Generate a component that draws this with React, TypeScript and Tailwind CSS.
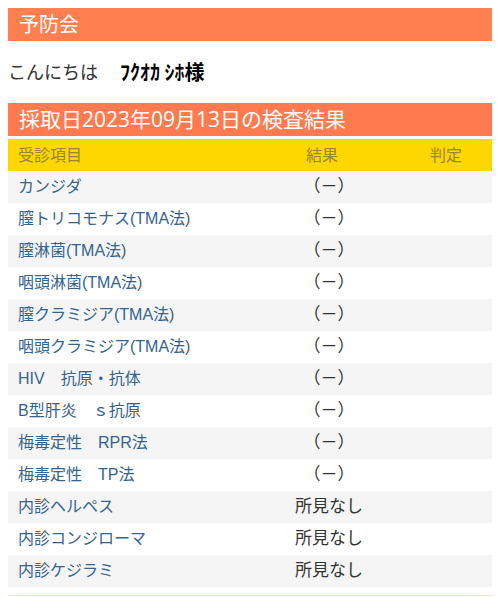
const rows: [string, string][] = [
  ["カンジダ", "（－）"],
  ["膣トリコモナス(TMA法)", "（－）"],
  ["膣淋菌(TMA法)", "（－）"],
  ["咽頭淋菌(TMA法)", "（－）"],
  ["膣クラミジア(TMA法)", "（－）"],
  ["咽頭クラミジア(TMA法)", "（－）"],
  ["HIV　抗原・抗体", "（－）"],
  ["B型肝炎　ｓ抗原", "（－）"],
  ["梅毒定性　RPR法", "（－）"],
  ["梅毒定性　TP法", "（－）"],
  ["内診ヘルペス", "所見なし"],
  ["内診コンジローマ", "所見なし"],
  ["内診ケジラミ", "所見なし"],
];

export default function App() {
  return (
    <div className="min-h-[597px] bg-white px-2 pt-2 font-['Open_Sans','Noto_Sans_CJK_JP',sans-serif]">
      {/* title bar */}
      <div className="flex h-[33px] items-center bg-[#ff7f50] px-[11px] text-[20px] text-white">
        予防会
      </div>

      {/* greeting */}
      <div className="flex h-[62px] items-center text-[18px] text-[#333]">
        <span>こんにちは</span>
        <span className="ml-[22px] font-['Noto_Sans_CJK_JP',sans-serif] text-[20px] font-bold text-black">
          ﾌｸｵｶ ｼﾎ様
        </span>
      </div>

      {/* section header */}
      <div className="flex h-[33px] items-center bg-[#ff7a4f] px-[11px] text-[21px] text-white">
        採取日2023年09月13日の検査結果
      </div>

      <div className="mt-[3px] flex h-8 items-center bg-[#ffd700] text-[16px] text-[#9a8530]">
        <div className="w-[262px] pl-[10px]">受診項目</div>
        <div className="w-[104px] text-center">結果</div>
        <div className="flex-1 pl-[56px]">判定</div>
      </div>

      <div className="border-b border-[#ffe2c2] pb-[8px] font-['Liberation_Sans','Noto_Sans_CJK_JP',sans-serif]">
        {rows.map(([name, result], i) => (
          <div
            key={name}
            className={`flex h-8 items-center text-[16px] ${i % 2 === 0 ? "bg-[#f5f5f5]" : "bg-white"}`}
          >
            <div className="w-[262px] pl-[10px] text-[#35648f]">{name}</div>
            <div className="w-[118px] text-center text-[17px] text-[#333]">{result}</div>
            <div className="flex-1" />
          </div>
        ))}
      </div>
    </div>
  );
}
